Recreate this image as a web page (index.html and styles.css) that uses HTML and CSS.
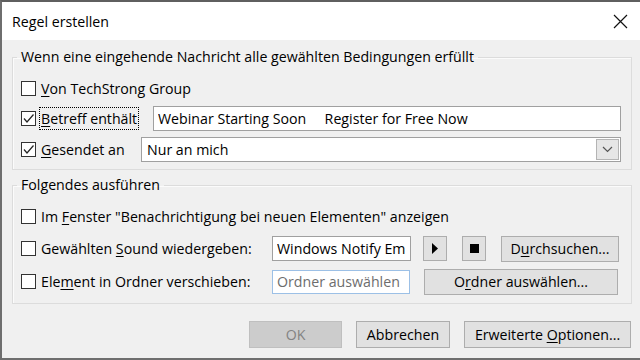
FILE: index.html
```html
<!DOCTYPE html>
<html>
<head>
	<meta charset="UTF-8">
	<title>Regel erstellen</title>
<link rel="stylesheet" href="styles.css">
</head>
<body>
<div class="window">
	<div class="titlebar">
		<span>Regel erstellen</span>
		<svg class="close" width="15" height="15" viewBox="0 0 15 15"><path d="M1 1 L14 14 M14 1 L1 14" stroke="#111" stroke-width="1.2" fill="none"/></svg>
	</div>

	<div class="dialog-body">
	<fieldset class="group">
		<legend>Wenn eine eingehende Nachricht alle gewählten Bedingungen erfüllt</legend>
		<div class="rows">
			<div class="row">
				<span class="box"></span><span><u>V</u>on TechStrong Group</span>
			</div>
			<div class="row tall">
				<div class="cell cell-subject">
					<span class="box checked"><svg width="13" height="13" viewBox="0 0 13 13"><path d="M2 6.5 L5 10 L11.5 2.5" stroke="#222" stroke-width="1.2" fill="none"/></svg></span>
					<span class="focus"><u>B</u>etreff enthält</span>
				</div>
				<input class="field grow" type="text" value="Webinar Starting Soon     Register for Free Now" readonly>
			</div>
			<div class="row">
				<div class="cell cell-sent">
					<span class="box checked"><svg width="13" height="13" viewBox="0 0 13 13"><path d="M2 6.5 L5 10 L11.5 2.5" stroke="#222" stroke-width="1.2" fill="none"/></svg></span>
					<span><u>G</u>esendet an</span>
				</div>
				<div class="combo grow">
					<span>Nur an mich</span>
					<span class="drop"><svg width="11" height="7" viewBox="0 0 11 7"><path d="M1 1 L5.5 5.5 L10 1" stroke="#555" stroke-width="1.2" fill="none"/></svg></span>
				</div>
			</div>
		</div>
	</fieldset>

	<fieldset class="group second">
		<legend>Folgendes ausführen</legend>
		<div class="rows">
			<div class="row r1">
				<span class="box"></span><span>Im <u>F</u>enster "Benachrichtigung bei neuen Elementen" anzeigen</span>
			</div>
			<div class="row r2">
				<div class="cell cell-action">
					<span class="box"></span><span>Gewählten <u>S</u>ound wiedergeben:</span>
				</div>
				<input class="field sound" type="text" value="Windows Notify Em" readonly>
				<button class="btn icon play"><svg width="8" height="11" viewBox="0 0 8 11"><path d="M1 0 L7 5.5 L1 11 Z" fill="#000"/></svg></button>
				<button class="btn icon stop"><span class="square"></span></button>
				<button class="btn browse">D<u>u</u>rchsuchen...</button>
			</div>
			<div class="row r2">
				<div class="cell cell-action">
					<span class="box"></span><span>Ele<u>m</u>ent in Ordner verschieben:</span>
				</div>
				<input class="field folder" type="text" placeholder="Ordner auswählen" readonly>
				<button class="btn pick">O<u>r</u>dner auswählen...</button>
			</div>
		</div>
	</fieldset>

	<div class="actions">
		<button class="btn ok" disabled>OK</button>
		<button class="btn cancel">Abbrechen</button>
		<button class="btn more"><span>Erweiterte <u>O</u>ptionen...</span></button>
	</div>
	</div>
</div>
</body>
</html>
```
FILE: styles.css
```css
* {
	box-sizing: border-box;
}
body {
	margin: 0;
	font-family: "Open Sans", "Noto Sans", sans-serif;
	font-size: 14.2px;
	color: #000;
	overflow: hidden;
}
.window {
	width: 640px;
	height: 360px;
	display: flex;
	flex-direction: column;
	border-top: 2px solid #5f5f5f;
	border-left: 2px solid #6e6e6e;
	border-bottom: 2px solid #6e6e6e;
}
.titlebar {
	height: 38px;
	background: #fff;
	display: flex;
	align-items: center;
	justify-content: space-between;
	padding: 0 12px 0 10px;
	font-size: 14.2px;
}
.dialog-body {
	flex: 1;
	background: #f0f0f0;
	padding: 8px 8px 0 10px;
}
.group {
	margin: 0;
	padding: 0 10px 5px 8px;
	border: 1px solid #dcdcdc;
	box-shadow: inset 1px 1px 0 #fbfbfb;
	min-width: 0;
}
.group legend {
	margin-left: -4px;
	padding: 0 4px;
	line-height: 18px;
}
.second {
	margin-top: 6px;
}
.rows {
	padding-top: 7px;
}
.row {
	display: flex;
	align-items: center;
	height: 30px;
}
.row.tall {
	height: 31px;
}
.second .r1 {
	height: 31px;
}
.second .r2 {
	height: 33px;
}
.cell {
	display: flex;
	align-items: center;
	flex: none;
}
.cell-subject {
	width: 132px;
}
.cell-sent {
	width: 120px;
}
.cell-action {
	width: 251px;
}
.grow {
	flex: 1;
}
.box {
	width: 15px;
	height: 15px;
	border: 1px solid #333;
	background: #fff;
	margin-right: 5px;
	flex: none;
	display: flex;
	align-items: center;
	justify-content: center;
}
.focus {
	outline: 1px dotted #000;
	padding: 0 1px;
	line-height: 21px;
	margin-left: -1px;
}
u {
	text-decoration-thickness: 1px;
	text-underline-offset: 2px;
}
.field {
	height: 25px;
	border: 1px solid #a0a0a0;
	background: #fff;
	font: inherit;
	color: #000;
	padding: 0 4px;
	outline: none;
	white-space: pre;
}
.combo {
	height: 25px;
	border: 1px solid #a0a0a0;
	background: #fff;
	display: flex;
	align-items: center;
	justify-content: space-between;
	padding: 0 1px 0 5px;
}
.drop {
	width: 23px;
	height: 21px;
	background: #e6e6e6;
	border: 1px solid #b4b4b4;
	display: flex;
	align-items: center;
	justify-content: center;
}
.sound {
	width: 139px;
}
.folder {
	width: 138px;
	height: 24px;
	border-color: #9cc0e6;
}
.folder::placeholder {
	color: #6d6d6d;
}
.btn {
	height: 26px;
	font: inherit;
	color: #000;
	background: #e1e1e1;
	border: 1px solid #adadad;
	padding: 0;
	flex: none;
	text-align: center;
}
.icon {
	width: 24px;
	height: 25px;
	display: flex;
	align-items: center;
	justify-content: center;
}
.play {
	margin-left: 12px;
}
.stop {
	margin-left: 15px;
}
.square {
	width: 9px;
	height: 9px;
	background: #000;
}
.browse {
	margin-left: 15px;
	width: 118px;
}
.pick {
	margin-left: 14px;
	width: 194px;
}
.actions {
	display: flex;
	justify-content: flex-end;
	gap: 14px;
	margin-top: 17px;
	padding-right: 1px;
}
.actions .btn {
	height: 27px;
}
.ok {
	width: 93px;
}
.ok:disabled {
	background: #cccccc;
	border-color: #bfbfbf;
	color: #838383;
}
.cancel {
	width: 94px;
}
.more {
	width: 167px;
}
```
